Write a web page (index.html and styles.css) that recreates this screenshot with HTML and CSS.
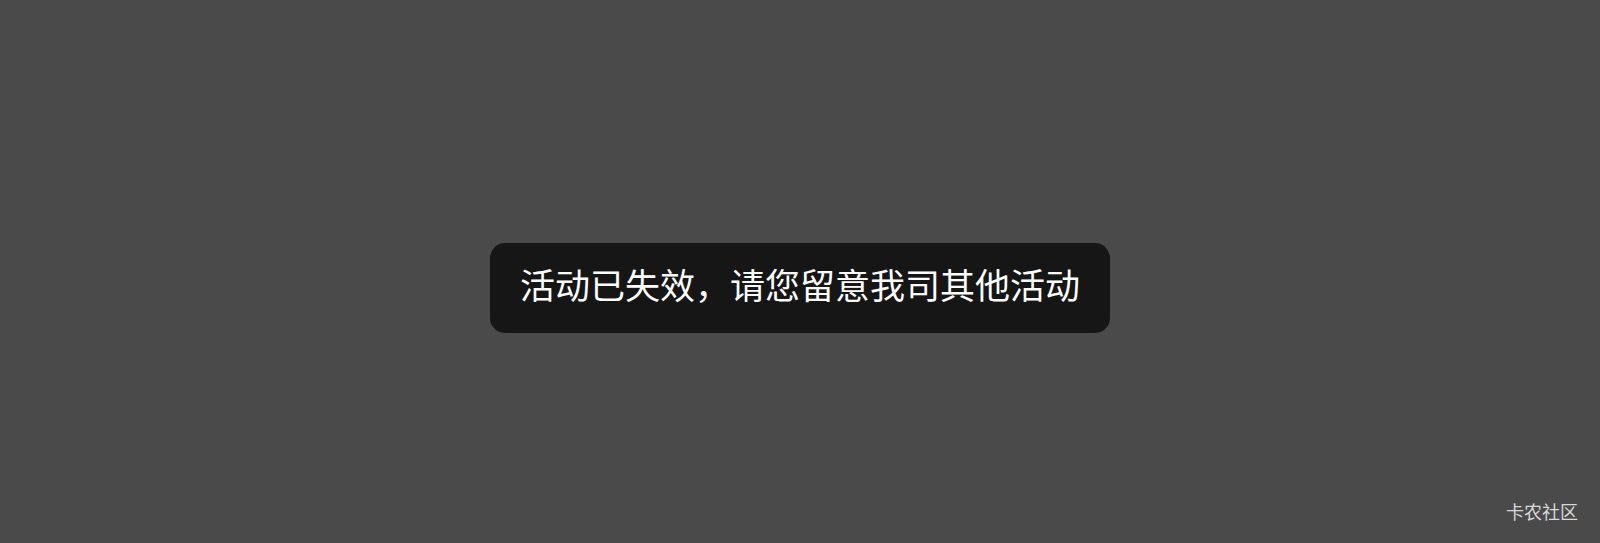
FILE: index.html
```html
<!DOCTYPE html>
<html lang="zh-CN">
<head>
<meta charset="utf-8">
<link rel="stylesheet" href="styles.css">
</head>
<body>
<div class="page">
  <div class="toast">活动已失效，请您留意我司其他活动</div>
  <div class="watermark">卡农社区</div>
</div>
</body>
</html>
```
FILE: styles.css
```css
html, body {
  margin: 0;
  padding: 0;
  width: 1600px;
  height: 543px;
  overflow: hidden;
  background: #4a4a4a;
  font-family: "Noto Sans CJK SC", "Noto Sans", sans-serif;
}
.page {
  position: relative;
  width: 1600px;
  height: 543px;
  display: flex;
  align-items: flex-start;
  justify-content: center;
}
.toast {
  margin-top: 243px;
  background: #161616;
  color: #ffffff;
  font-size: 35px;
  line-height: 82px;
  height: 82px;
  padding: 0 30px 8px;
  border-radius: 15px;
  white-space: nowrap;
}
.watermark {
  position: absolute;
  right: 22px;
  bottom: 21px;
  color: #d8d8d8;
  font-size: 18px;
  line-height: 22px;
}
```
